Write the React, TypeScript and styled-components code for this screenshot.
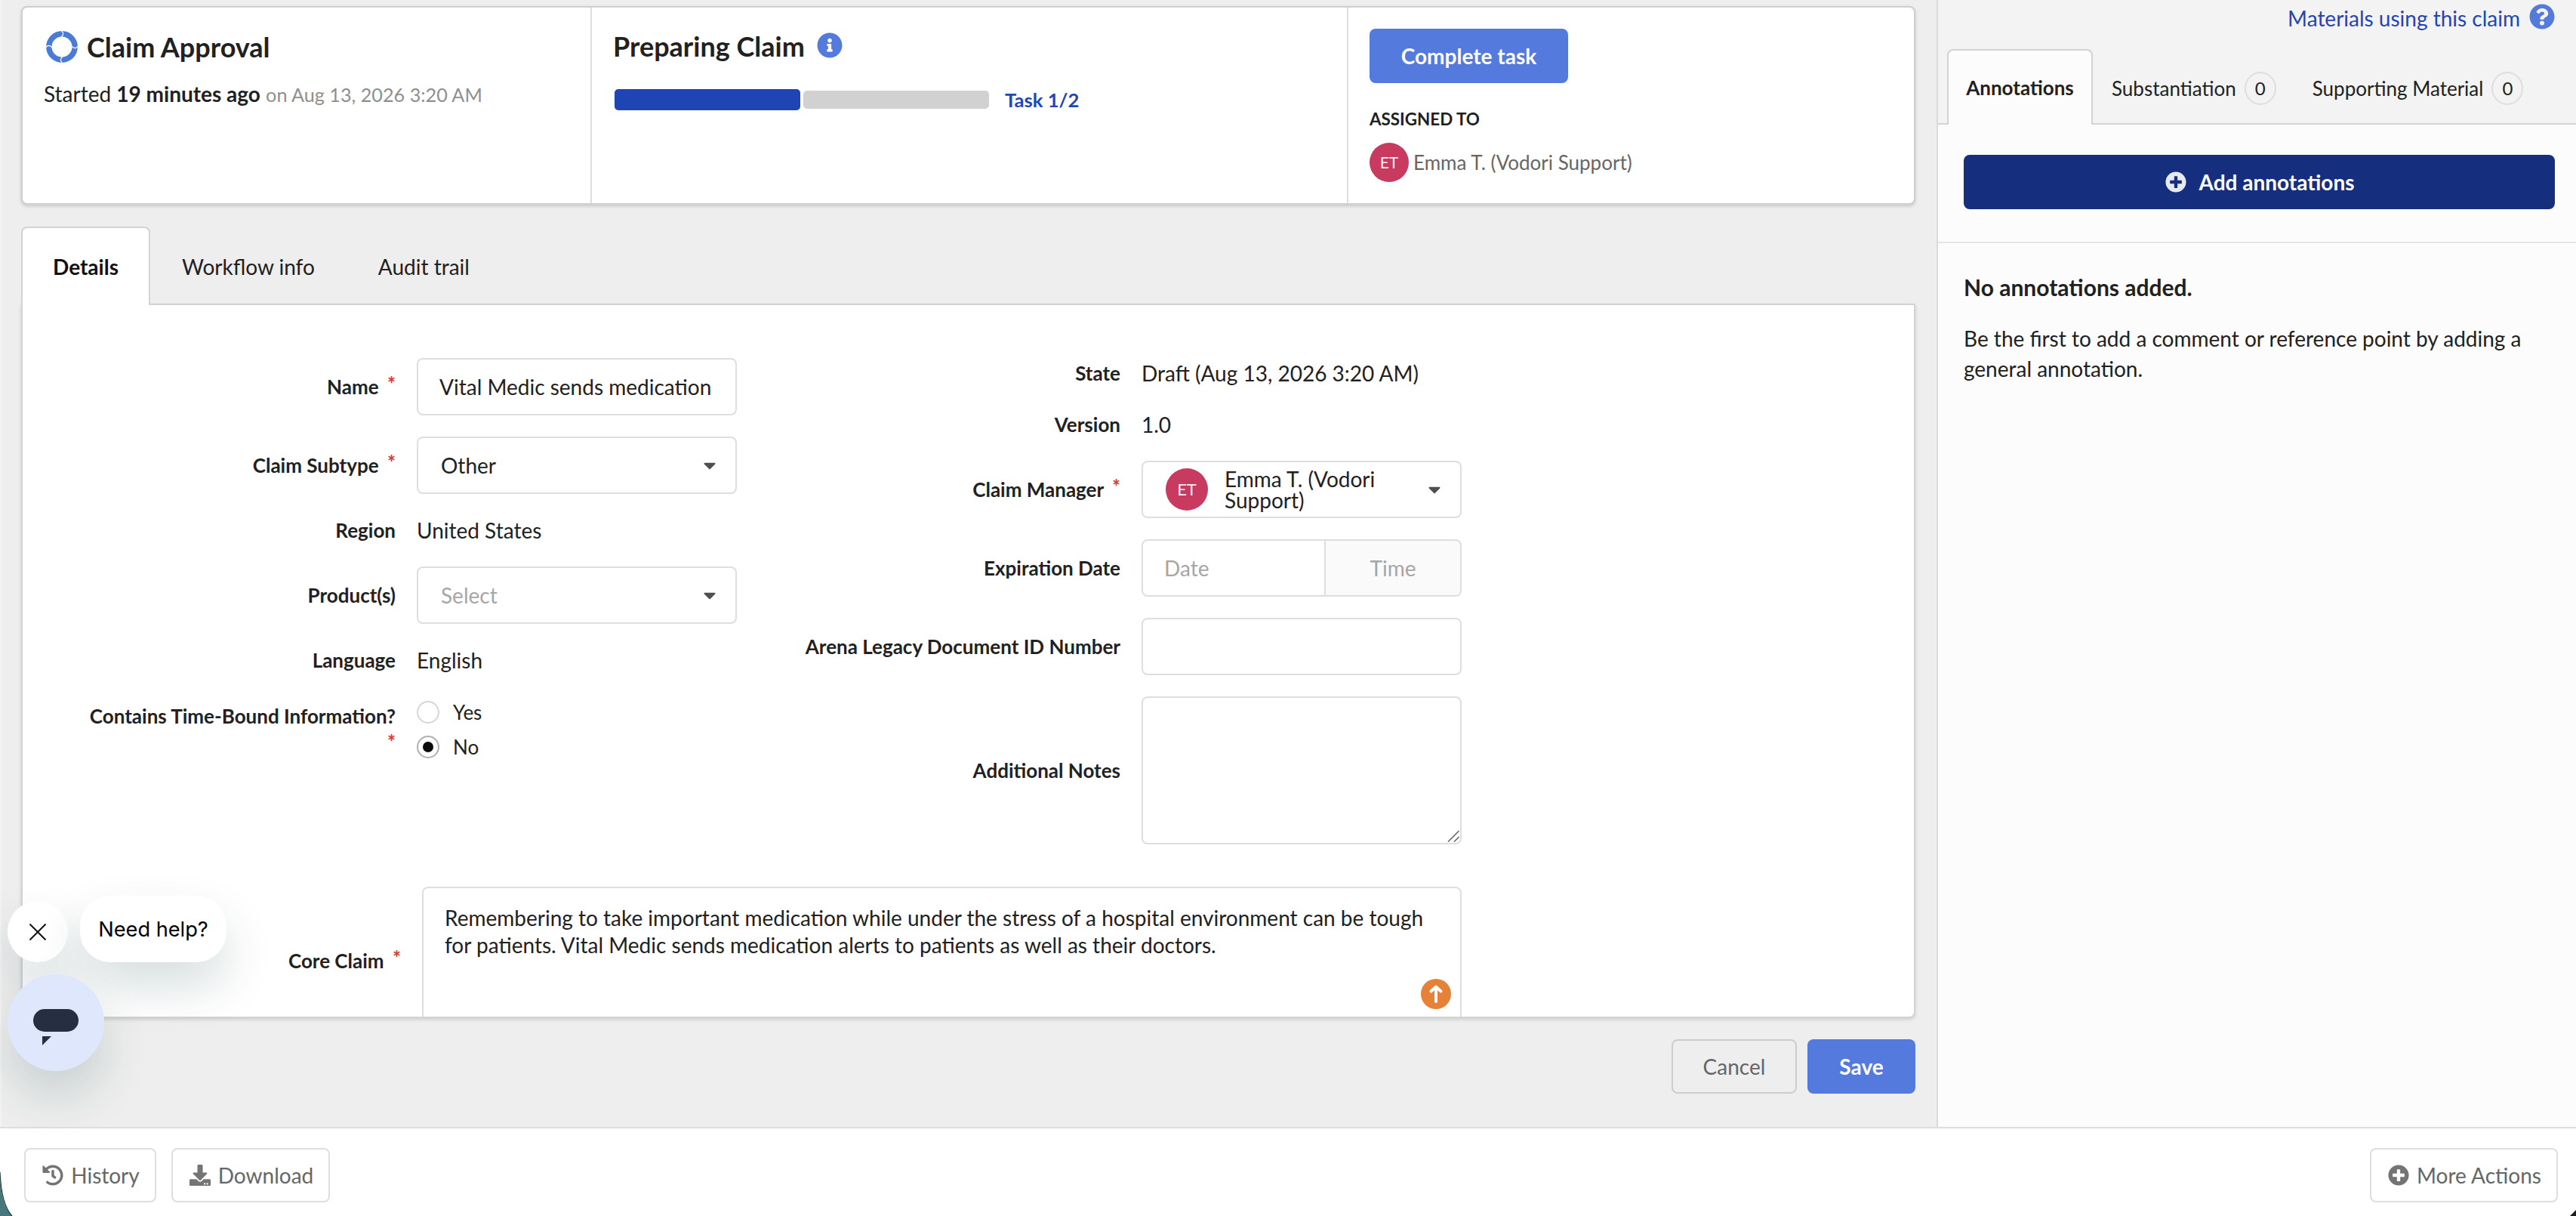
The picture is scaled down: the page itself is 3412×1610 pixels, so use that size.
import React from 'react';
import styled, { createGlobalStyle } from 'styled-components';
import {
  FaCaretDown,
  FaDownload,
  FaHistory,
  FaInfoCircle,
  FaPlusCircle,
  FaQuestionCircle,
} from 'react-icons/fa';

const c = {
  ink: '#212121',
  muted: '#8f8f8f',
  soft: '#666666',
  placeholder: '#a6a6a6',
  line: '#d3d3d4',
  field: '#dededf',
  blue: '#547add',
  link: '#1f45b8',
  navy: '#152f7e',
  rose: '#c93a60',
  red: '#d43a34',
};

const GlobalStyle = createGlobalStyle`
  * { box-sizing: border-box; }
  body {
    margin: 0;
    background: #fff;
    color: ${c.ink};
    font-family: Lato, 'Liberation Sans', sans-serif;
    font-size: 28px;
    line-height: 40px;
  }
  svg { display: block; flex: none; }
`;

const Window = styled.div`
  position: relative;
  width: 3412px;
  height: 1610px;
  overflow: hidden;
  display: flex;
  flex-direction: column;
`;

const Body = styled.div`
  flex: none;
  height: 1492px;
  display: flex;
`;

const Main = styled.main`
  width: 2565px;
  padding: 8px 28px 0 26px;
  background: #eeeeee;
  border-left: 2px solid #f3f3f3;
  display: flex;
  flex-direction: column;
`;

/* ---------- Workflow summary ---------- */

const Summary = styled.section`
  flex: none;
  height: 263px;
  display: flex;
  background: #fff;
  border: 2px solid #cfcfd0;
  border-radius: 8px;
  box-shadow: 0 2px 4px rgba(34, 36, 38, 0.18);
`;

const SummaryCell = styled.div<{ $width?: number; $top: number }>`
  ${(p) => (p.$width ? `width: ${p.$width}px; border-right: 2px solid ${c.field};` : 'flex: 1;')}
  padding: ${(p) => p.$top}px 28px 0;
  display: flex;
  flex-direction: column;
  align-items: flex-start;
`;

const TitleRow = styled.div<{ $gap: number; $indent?: number }>`
  height: 44px;
  display: flex;
  align-items: center;
  gap: ${(p) => p.$gap}px;
  padding-left: ${(p) => p.$indent ?? 0}px;
`;

const Title = styled.h2`
  margin: 0;
  font-size: 36px;
  line-height: 44px;
  font-weight: 700;
`;

const InfoMark = styled(FaInfoCircle)`
  color: ${c.blue};
  margin-top: -3px;
`;

const Started = styled.p`
  margin: 20px 0 0;
`;

const StartedDate = styled.span`
  font-size: 25.2px;
  color: ${c.muted};
`;

const Progress = styled.div`
  margin: 35px 0 0 2px;
  height: 28px;
  display: flex;
  align-items: center;
  gap: 4px;
`;

const Step = styled.div<{ $current?: boolean }>`
  width: 246px;
  height: ${(p) => (p.$current ? 28 : 24)}px;
  border-radius: 5px;
  background: ${(p) => (p.$current ? '#1f45b5' : '#d1d1d1')};
`;

const StepText = styled.span`
  margin-left: 17px;
  font-size: 25.6px;
  font-weight: 700;
  color: ${c.link};
`;

const Overline = styled.div`
  margin-top: 32px;
  font-size: 22.4px;
  line-height: 32px;
  font-weight: 700;
`;

const Assignee = styled.div`
  margin-top: 15px;
  display: flex;
  align-items: center;
  gap: 6px;
  font-size: 26px;
  color: ${c.soft};
`;

const Avatar = styled.span<{ $size: number }>`
  flex: none;
  width: ${(p) => p.$size}px;
  height: ${(p) => p.$size}px;
  border-radius: 50%;
  background: ${c.rose};
  color: #fbeef2;
  font-size: ${(p) => (p.$size > 52 ? 22 : 21)}px;
  display: flex;
  align-items: center;
  justify-content: center;
`;

/* ---------- Buttons ---------- */

const Button = styled.button<{ $kind?: 'primary' | 'outline' | 'navy'; $width?: number; $gap?: number }>`
  flex: none;
  height: 72px;
  width: ${(p) => (p.$width ? `${p.$width}px` : 'auto')};
  padding: 0;
  display: flex;
  align-items: center;
  justify-content: center;
  gap: ${(p) => p.$gap ?? 0}px;
  font: inherit;
  border-radius: 8px;
  ${(p) =>
    p.$kind === 'outline'
      ? `border: 2px solid ${c.field}; background: transparent; color: ${c.soft};`
      : `border: 0; background: ${p.$kind === 'navy' ? c.navy : c.blue}; color: #fff; font-weight: 700;`}
`;

const CancelButton = styled(Button)`
  border-color: #cdcdce;
`;

const ToolButton = styled(Button)`
  padding-left: 2px;
`;

const ButtonIcon = styled.span`
  display: flex;
  font-size: 28px;
  opacity: 0.9;
`;

/* ---------- Tabs ---------- */

const Tabs = styled.nav`
  position: relative;
  z-index: 1;
  flex: none;
  height: 104px;
  margin: 29px 0 -2px;
  display: flex;
`;

const Tab = styled.div<{ $active?: boolean }>`
  display: flex;
  align-items: center;
  ${(p) =>
    p.$active
      ? `width: 171px; justify-content: center; background: #fff; font-weight: 700; color: #111;
         border: 2px solid ${c.line}; border-bottom: 0; border-radius: 8px 8px 0 0;`
      : 'padding: 1px 42px 0;'}
`;

/* ---------- Form ---------- */

const Panel = styled.section`
  flex: none;
  height: 946px;
  overflow: hidden;
  padding-top: 70px;
  background: #fff;
  border: 2px solid ${c.line};
  border-radius: 0 0 8px 8px;
  box-shadow: 0 2px 4px rgba(34, 36, 38, 0.16);
`;

const Columns = styled.div`
  display: flex;
`;

const Column = styled.div`
  display: flex;
  flex-direction: column;
  gap: 28px;
`;

const Field = styled.div<{ $label: number; $top?: boolean }>`
  display: grid;
  grid-template-columns: ${(p) => p.$label}px 424px;
  column-gap: 28px;
  align-items: ${(p) => (p.$top ? 'start' : 'center')};
`;

const Label = styled.label<{ $drop?: number }>`
  justify-self: end;
  max-width: 424px;
  padding-top: ${(p) => p.$drop ?? 0}px;
  font-size: 26px;
  line-height: 38px;
  font-weight: 700;
  text-align: right;
`;

const Star = styled.span`
  margin-left: 5px;
  color: ${c.red};
  line-height: 0;
  vertical-align: 4px;
`;

const Box = styled.div`
  position: relative;
  height: 76px;
  padding: 0 21px 0 28px;
  display: flex;
  align-items: center;
  background: #fff;
  border: 2px solid ${c.field};
  border-radius: 8px;
`;

const SelectBox = styled(Box)`
  padding-left: 30px;
`;

const Placeholder = styled.span`
  color: ${c.placeholder};
`;

const Caret = styled(FaCaretDown)`
  margin-left: auto;
  font-size: 26px;
  color: #4f4f4f;
`;

const Person = styled.span`
  width: 210px;
  margin-left: 22px;
  line-height: 28px;
`;

const DateTime = styled.div`
  display: flex;
`;

const DateBox = styled(Box)`
  width: 244px;
  border-radius: 8px 0 0 8px;
`;

const TimeBox = styled(Box)`
  flex: 1;
  padding: 0;
  justify-content: center;
  background: #fafafa;
  border-left: 0;
  border-radius: 0 8px 8px 0;
`;

const NotesBox = styled(Box)`
  height: 196px;
`;

const ResizeGrip = styled.svg`
  position: absolute;
  right: 1px;
  bottom: 1px;
`;

const Radios = styled.div`
  display: flex;
  flex-direction: column;
  gap: 4px;
  font-size: 26px;
`;

const RadioRow = styled.div`
  height: 42px;
  display: flex;
  align-items: center;
  gap: 18px;
`;

const Radio = styled.span<{ $on?: boolean }>`
  width: 30px;
  height: 30px;
  border-radius: 50%;
  border: 2px solid ${(p) => (p.$on ? '#b0b0b1' : '#d6d6d7')};
  display: flex;
  align-items: center;
  justify-content: center;
  &::after {
    content: '';
    width: 14px;
    height: 14px;
    border-radius: 50%;
    background: ${(p) => (p.$on ? '#0c0c0c' : 'transparent')};
  }
`;

const ClaimRow = styled.div`
  margin-top: 56px;
  display: grid;
  grid-template-columns: 501px 1377px;
  column-gap: 28px;
  align-items: center;
`;

const ClaimBox = styled.div`
  position: relative;
  height: 196px;
  padding: 21px 24px 0 28px;
  border: 2px solid ${c.field};
  border-radius: 8px;
  line-height: 36px;
`;

const UploadBadge = styled.span`
  position: absolute;
  right: 12px;
  top: 120px;
  width: 40px;
  height: 40px;
  border-radius: 50%;
  background: #e58237;
  display: flex;
  align-items: center;
  justify-content: center;
`;

const Actions = styled.div`
  margin-top: 28px;
  display: flex;
  justify-content: flex-end;
  gap: 14px;
`;

/* ---------- Side panel ---------- */

const Side = styled.aside`
  flex: 1;
  border-left: 2px solid #dadadb;
  background: #fcfcfc;
  display: flex;
  flex-direction: column;
`;

const SideHeader = styled.header`
  flex: none;
  height: 165px;
  background: #f3f3f3;
  border-bottom: 2px solid ${c.line};
`;

const Materials = styled.div`
  height: 65px;
  padding: 4px 28px 0 0;
  display: flex;
  justify-content: flex-end;
  align-items: flex-start;
  gap: 12px;
  color: ${c.link};
`;

const HelpMark = styled(FaQuestionCircle)`
  margin-top: 1px;
  color: ${c.blue};
`;

const SideTabs = styled.nav`
  height: 100px;
  padding-left: 12px;
  display: flex;
  font-size: 26px;
`;

const SideTab = styled.div<{ $active?: boolean }>`
  display: flex;
  align-items: center;
  gap: 11px;
  padding-top: 3px;
  ${(p) =>
    p.$active
      ? `width: 193px; justify-content: center; background: #fcfcfc; font-weight: 700; padding-top: 0;
         border: 2px solid ${c.line}; border-bottom: 0; border-radius: 8px 8px 0 0;`
      : 'padding-left: 25px; padding-right: 23px;'}
`;

const Count = styled.span`
  width: 42px;
  height: 44px;
  border: 2px solid ${c.field};
  border-radius: 50%;
  font-size: 24px;
  display: flex;
  align-items: center;
  justify-content: center;
`;

const AddArea = styled.div`
  padding: 40px 28px 43px 34px;
  border-bottom: 2px solid #e6e6e6;
`;

const WideButton = styled(Button)`
  width: 100%;
  padding-left: 1px;
`;

const Empty = styled.div`
  padding: 38px 28px 0 34px;
`;

const EmptyTitle = styled.h3`
  margin: 0 0 28px;
  font-size: 30px;
  line-height: 40px;
`;

const EmptyText = styled.p`
  margin: 0;
`;

/* ---------- Footer ---------- */

const Footer = styled.footer`
  flex: 1;
  padding: 26px 24px 0 32px;
  background: #fff;
  border-top: 2px solid #dededf;
  display: flex;
  align-items: flex-start;
  gap: 20px;
`;

const Spacer = styled.div`
  flex: 1;
`;

/* ---------- Floating chat ---------- */

const Floating = styled.div`
  position: absolute;
  display: flex;
  align-items: center;
  justify-content: center;
  box-shadow: 0 32px 64px rgba(0, 50, 58, 0.16);
`;

const ChatClose = styled(Floating)`
  left: 10px;
  top: 1193px;
  width: 80px;
  height: 81px;
  border-radius: 50%;
  background: #fff;
`;

const ChatPrompt = styled(Floating)`
  left: 106px;
  top: 1186px;
  width: 194px;
  height: 88px;
  padding-top: 1px;
  border-radius: 40px;
  background: #fff;
  color: #000;
  font-family: Inter, sans-serif;
  font-size: 27.2px;
  white-space: nowrap;
`;

const ChatLauncher = styled(Floating)`
  left: 10px;
  top: 1290px;
  width: 128px;
  height: 128px;
  border-radius: 50%;
  background: #dfe7fd;
`;

const Corner = styled.svg<{ $side: 'left' | 'right' }>`
  position: absolute;
  bottom: 0;
  ${(p) => p.$side}: 0;
`;

const CycleIcon = () => (
  <svg width="42" height="42" viewBox="-21 -21 42 42">
    <circle r="17.2" fill="none" stroke="#4a7bd9" strokeWidth="7.4" />
    {[0, 90, 180, 270].map((a) => (
      <path
        key={a}
        d="M-0.6 -21.5 L1.6 -18.4 L1.4 -16 L-1 -12.6"
        transform={`rotate(${a})`}
        fill="none"
        stroke="#fff"
        strokeWidth="1.2"
      />
    ))}
  </svg>
);

const Required = () => (
  <>
    {' '}
    <Star>*</Star>
  </>
);

export default function App() {
  return (
    <>
      <GlobalStyle />
      <Window>
        <Body>
          <Main>
            <Summary>
              <SummaryCell $width={754} $top={30}>
                <TitleRow $gap={12} $indent={3}>
                  <CycleIcon />
                  <Title>Claim Approval</Title>
                </TitleRow>
                <Started>
                  Started <b>19 minutes ago</b> <StartedDate>on Aug 13, 2026 3:20 AM</StartedDate>
                </Started>
              </SummaryCell>
              <SummaryCell $width={1002} $top={29}>
                <TitleRow $gap={16}>
                  <Title>Preparing Claim</Title>
                  <InfoMark size={34} />
                </TitleRow>
                <Progress>
                  <Step $current />
                  <Step />
                  <StepText>Task 1/2</StepText>
                </Progress>
              </SummaryCell>
              <SummaryCell $top={28}>
                <Button $width={263}>Complete task</Button>
                <Overline>ASSIGNED TO</Overline>
                <Assignee>
                  <Avatar $size={52}>ET</Avatar>
                  Emma T. (Vodori Support)
                </Assignee>
              </SummaryCell>
            </Summary>

            <Tabs>
              <Tab $active>Details</Tab>
              <Tab>Workflow info</Tab>
              <Tab>Audit trail</Tab>
            </Tabs>

            <Panel>
              <Columns>
                <Column>
                  <Field $label={494}>
                    <Label>Name<Required /></Label>
                    <Box>Vital Medic sends medication</Box>
                  </Field>
                  <Field $label={494}>
                    <Label>Claim Subtype<Required /></Label>
                    <SelectBox>Other<Caret /></SelectBox>
                  </Field>
                  <Field $label={494}>
                    <Label>Region</Label>
                    <span>United States</span>
                  </Field>
                  <Field $label={494}>
                    <Label>Product(s)</Label>
                    <SelectBox><Placeholder>Select</Placeholder><Caret /></SelectBox>
                  </Field>
                  <Field $label={494}>
                    <Label>Language</Label>
                    <span>English</span>
                  </Field>
                  <Field $label={494} $top>
                    <Label $drop={7}>Contains Time-Bound Information?<Required /></Label>
                    <Radios>
                      <RadioRow><Radio />Yes</RadioRow>
                      <RadioRow><Radio $on />No</RadioRow>
                    </Radios>
                  </Field>
                </Column>
                <Column>
                  <Field $label={508}>
                    <Label>State</Label>
                    <span>Draft (Aug 13, 2026 3:20 AM)</span>
                  </Field>
                  <Field $label={508}>
                    <Label>Version</Label>
                    <span>1.0</span>
                  </Field>
                  <Field $label={508}>
                    <Label>Claim Manager<Required /></Label>
                    <SelectBox>
                      <Avatar $size={56}>ET</Avatar>
                      <Person>Emma T. (Vodori Support)</Person>
                      <Caret />
                    </SelectBox>
                  </Field>
                  <Field $label={508}>
                    <Label>Expiration Date</Label>
                    <DateTime>
                      <DateBox><Placeholder>Date</Placeholder></DateBox>
                      <TimeBox><Placeholder>Time</Placeholder></TimeBox>
                    </DateTime>
                  </Field>
                  <Field $label={508}>
                    <Label>Arena Legacy Document ID Number</Label>
                    <Box />
                  </Field>
                  <Field $label={508}>
                    <Label>Additional Notes</Label>
                    <NotesBox>
                      <ResizeGrip width="16" height="16" viewBox="0 0 16 16">
                        <path d="M1 15.5 L15.5 1 M9 15.5 L15.5 9" stroke="#6b6b6b" strokeWidth="1.6" />
                      </ResizeGrip>
                    </NotesBox>
                  </Field>
                </Column>
              </Columns>
              <ClaimRow>
                <Label>Core Claim<Required /></Label>
                <ClaimBox>
                  Remembering to take important medication while under the stress of a hospital environment
                  can be tough for patients. Vital Medic sends medication alerts to patients as well as
                  their doctors.
                  <UploadBadge>
                    <svg width="40" height="40" viewBox="0 0 40 40" fill="none" stroke="#fff" strokeWidth="4" strokeLinecap="round" strokeLinejoin="round">
                      <path d="M20 30 V11 M13.5 16.5 L20 10.5 L26.5 16.5" />
                    </svg>
                  </UploadBadge>
                </ClaimBox>
              </ClaimRow>
            </Panel>

            <Actions>
              <CancelButton $kind="outline" $width={166}>Cancel</CancelButton>
              <Button $width={143}>Save</Button>
            </Actions>
          </Main>

          <Side>
            <SideHeader>
              <Materials>
                Materials using this claim
                <HelpMark size={34} />
              </Materials>
              <SideTabs>
                <SideTab $active>Annotations</SideTab>
                <SideTab>Substantiation<Count>0</Count></SideTab>
                <SideTab>Supporting Material<Count>0</Count></SideTab>
              </SideTabs>
            </SideHeader>
            <AddArea>
              <WideButton $kind="navy" $gap={17}>
                <ButtonIcon><FaPlusCircle /></ButtonIcon>
                Add annotations
              </WideButton>
            </AddArea>
            <Empty>
              <EmptyTitle>No annotations added.</EmptyTitle>
              <EmptyText>
                Be the first to add a comment or reference point by adding a general annotation.
              </EmptyText>
            </Empty>
          </Side>
        </Body>

        <Footer>
          <ToolButton $kind="outline" $width={175} $gap={10}>
            <ButtonIcon><FaHistory /></ButtonIcon>
            History
          </ToolButton>
          <ToolButton $kind="outline" $width={210} $gap={10}>
            <ButtonIcon><FaDownload /></ButtonIcon>
            Download
          </ToolButton>
          <Spacer />
          <ToolButton $kind="outline" $width={249} $gap={10}>
            <ButtonIcon><FaPlusCircle /></ButtonIcon>
            More Actions
          </ToolButton>
        </Footer>

        <ChatClose>
          <svg width="24" height="24" viewBox="0 0 24 24" stroke="#111" strokeWidth="2">
            <path d="M1.5 1.5 L22.5 22.5 M22.5 1.5 L1.5 22.5" />
          </svg>
        </ChatClose>
        <ChatPrompt>Need help?</ChatPrompt>
        <ChatLauncher>
          <svg width="128" height="128" viewBox="0 0 128 128" fill="#262f42">
            <rect x="34" y="46" width="60" height="30" rx="15" />
            <path d="M46 82 H58 L46 94 Z" />
          </svg>
        </ChatLauncher>

        <Corner $side="left" width="18" height="64" viewBox="0 0 18 64">
          <path d="M0 10 C1 34 5 53 16 64 H0 Z" fill="#47777a" />
          <path d="M0 6 C1 32 5 52 16 64" fill="none" stroke="#1c3a3c" strokeWidth="1.2" />
        </Corner>
        <Corner $side="right" width="8" height="8" viewBox="0 0 8 8">
          <path d="M8 0 L0 8 H8 Z" fill="#16201f" />
        </Corner>
      </Window>
    </>
  );
}
